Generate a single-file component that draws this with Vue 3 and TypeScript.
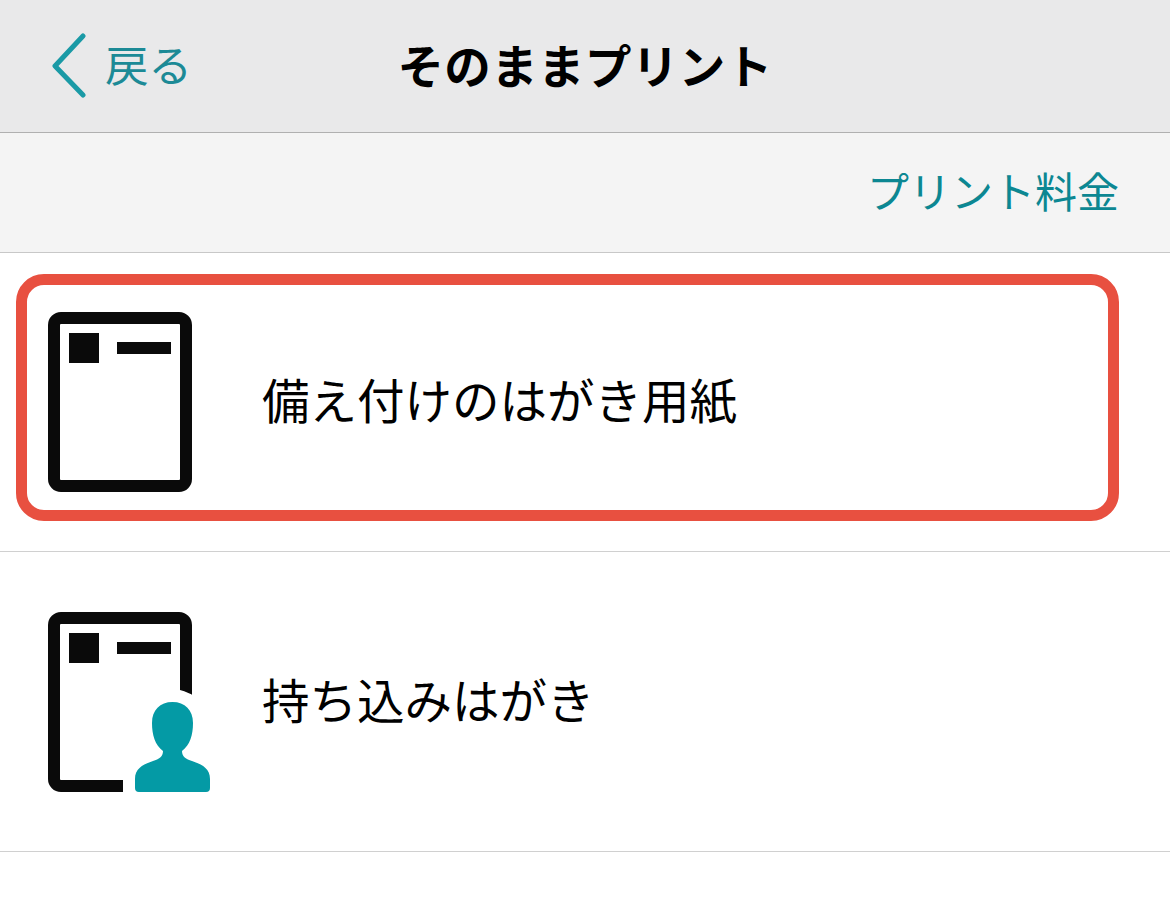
<script setup lang="ts">
interface Row { label: string; guest: boolean }
const rows: Row[] = [
  { label: '備え付けのはがき用紙', guest: false },
  { label: '持ち込みはがき', guest: true },
]
</script>

<template>
  <div class="page">
    <header class="nav">
      <a class="back">
        <svg class="chev" width="36" height="66" viewBox="0 0 36 66">
          <path d="M32 3 L4 33 L32 62" fill="none" stroke="#1a9aa6" stroke-width="5" stroke-linecap="round" stroke-linejoin="round" />
        </svg>
        <span class="back-text">戻る</span>
      </a>
      <h1 class="title">そのままプリント</h1>
      <span></span>
    </header>
    <div class="sub">
      <a class="price">プリント料金</a>
    </div>
    <ul class="list">
      <li v-for="(row, i) in rows" :key="row.label" class="row" :class="{ first: i === 0 }">
        <svg class="icon" width="164" height="180" viewBox="0 0 164 180">
          <rect x="6" y="6" width="132" height="168" rx="7" fill="#fff" stroke="#0a0a0a" stroke-width="12" />
          <rect x="21" y="21" width="30" height="30" fill="#0a0a0a" />
          <rect x="69" y="30" width="54" height="12" fill="#0a0a0a" />
          <g v-if="row.guest">
            <path d="M75 180 L75 130 Q75 78 125 77 Q135 77 150 86 L164 86 L164 180 Z" fill="#fff" />
            <path d="M87 176 L87 167 C87 156 96 152 105 149 C111 147 115 145 115 139 C107 133 104 123 104 111 C104 98 112 90 124.500 90 C137 90 145 98 145 111 C145 123 142 133 134 139 C134 145 138 147 144 149 C153 152 162 156 162 167 L162 176 Q162 180 158 180 L91 180 Q87 180 87 176 Z" fill="#049aa5" />
          </g>
        </svg>
        <span class="label">{{ row.label }}</span>
        <div v-if="i === 0" class="frame"></div>
      </li>
    </ul>
  </div>
</template>

<style scoped>
.page {
  width: 1170px;
  height: 900px;
  background: #fff;
  overflow: hidden;
  font-family: "Noto Sans CJK JP", "Noto Sans", sans-serif;
}
.nav {
  height: 132px;
  box-sizing: content-box;
  background: #e9e9ea;
  border-bottom: 1px solid #b0b0b0;
  display: grid;
  grid-template-columns: 1fr auto 1fr;
  align-items: center;
}
.back {
  display: flex;
  align-items: center;
  gap: 17px;
  padding-left: 51px;
  color: #1c8a96;
}
.back-text {
  font-size: 43.500px;
  line-height: 60px;
  padding-bottom: 4px;
  margin-left: 1px;
}
.title {
  margin: 0 0 4px;
  font-size: 46.500px;
  line-height: 60px;
  font-weight: 700;
  color: #000;
  letter-spacing: 0.4px;
}
.sub {
  height: 119px;
  background: #f4f4f4;
  border-bottom: 1px solid #c8c8c8;
  display: flex;
  align-items: center;
  justify-content: flex-end;
  padding-right: 51px;
}
.price {
  font-size: 42px;
  line-height: 60px;
  color: #0c8792;
  padding-bottom: 6px;
}
.list {
  list-style: none;
  margin: 0;
  padding: 0;
}
.row {
  position: relative;
  height: 299px;
  border-bottom: 1px solid #d0d0d0;
  display: flex;
  align-items: center;
  padding-left: 48px;
}
.row.first {
  height: 298px;
}
.icon {
  flex: none;
  display: block;
}
.label {
  margin-left: 50px;
  font-size: 47.500px;
  line-height: 64px;
  padding-bottom: 6px;
  color: #000;
}
.frame {
  position: absolute;
  left: 16px;
  top: 21px;
  width: 1103px;
  height: 247px;
  box-sizing: border-box;
  border: 11px solid #e85040;
  border-radius: 28px;
  pointer-events: none;
}
</style>
